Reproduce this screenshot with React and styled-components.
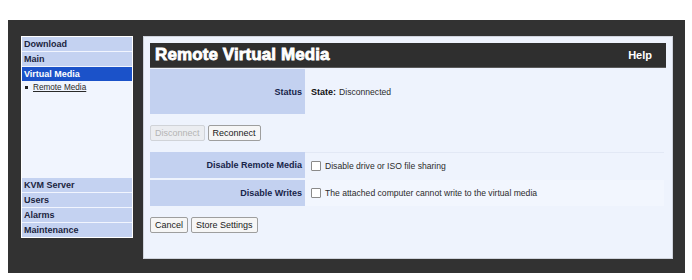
import React from "react";
import styled, { createGlobalStyle, css } from "styled-components";

const GlobalStyle = createGlobalStyle`
  html, body {
    margin: 0;
    padding: 0;
    background: #ffffff;
  }
  body {
    font-family: "Liberation Sans", Arial, sans-serif;
    font-size: 9px;
    color: #222;
  }
`;

const Frame = styled.div`
  margin: 20px 7px 0 8px;
  height: 253px;
  background: #323232;
  box-sizing: border-box;
  padding: 16px 12px 0 13px;
  display: flex;
  align-items: flex-start;
  gap: 10px;
`;

const Sidebar = styled.nav`
  width: 112px;
  height: 202px;
  box-sizing: border-box;
  background: #f1f5fe;
  border: 1px solid #ffffff;
  display: flex;
  flex-direction: column;
  gap: 1px;
`;

const MenuItem = styled.div`
  height: 14px;
  line-height: 14px;
  padding-left: 2px;
  font-weight: bold;
  font-size: 9px;
  color: #1b2440;
  background: #c4d2f1;
  ${(p) =>
    p.$active &&
    css`
      background: #1b52c9;
      color: #ffffff;
    `}
`;

const SubMenu = styled.ul`
  list-style: none;
  margin: -1px 0 0;
  padding: 0 0 0 3px;
`;

const SubItem = styled.li`
  display: flex;
  align-items: center;
  gap: 5px;
  height: 12px;
  font-size: 8.2px;
  color: #2a2a2a;

  &::before {
    content: "";
    width: 3px;
    height: 3px;
    background: #222;
  }

  a {
    color: inherit;
    text-decoration: underline;
  }
`;

const Spacer = styled.div`
  flex: 1;
`;

const Panel = styled.main`
  width: 530px;
  height: 223px;
  box-sizing: border-box;
  background: #eef3fd;
  border: 1px solid #cfd3dc;
  padding: 6px 6px 0 6px;
  display: flex;
  flex-direction: column;
`;

const TitleBar = styled.header`
  height: 25px;
  background: #2f2f2f;
  border-bottom: 1px solid #5a5a5a;
  box-sizing: border-box;
  display: flex;
  align-items: center;
  justify-content: space-between;
  padding: 0 14px 0 5px;
  color: #ffffff;
`;

const Title = styled.h1`
  margin: 0;
  font-size: 17px;
  font-weight: bold;
  -webkit-text-stroke: 0.8px #ffffff;
  letter-spacing: 0.1px;
`;

const HelpLink = styled.span`
  font-size: 11px;
  font-weight: bold;
`;

const FormTable = styled.div`
  display: grid;
  grid-template-columns: 155px 1fr;
  row-gap: 2px;
  margin-top: ${(p) => p.$top || 0}px;
`;

const Label = styled.div`
  height: ${(p) => p.$h}px;
  background: #c3d1f0;
  display: flex;
  align-items: center;
  justify-content: flex-end;
  padding-right: 3px;
  font-weight: bold;
  color: #17244a;
`;

const Value = styled.div`
  height: ${(p) => p.$h}px;
  display: flex;
  align-items: center;
  gap: 3px;
  padding-left: 6px;
  font-size: 8.6px;
  color: #2b2b2b;
  ${(p) =>
    p.$lined &&
    css`
      border-top: 1px solid #e2e8f5;
      box-sizing: border-box;
      margin-right: 2px;
    `}
  ${(p) =>
    p.$shade &&
    css`
      background: #f2f6fe;
      margin-right: 2px;
    `}

  b {
    font-size: 9px;
    color: #111;
  }
`;

const Checkbox = styled.span`
  width: 8px;
  height: 8px;
  border: 1px solid #8a8a8a;
  border-radius: 1px;
  background: #ffffff;
  margin-right: 1px;
`;

const ButtonRow = styled.div`
  display: flex;
  gap: 3px;
  margin-top: ${(p) => p.$top}px;
`;

const Button = styled.button`
  height: 16px;
  padding: 0 4px;
  font-family: "Liberation Sans", Arial, sans-serif;
  font-size: 9px;
  color: #1a1a1a;
  background: #f6f6f6;
  border: 1px solid #9e9e9e;
  border-radius: 2px;
  ${(p) =>
    p.disabled &&
    css`
      color: #b4b4b4;
      background: #ebedf1;
      border-color: #d0d3d8;
    `}
`;

export default function App() {
  return (
    <>
      <GlobalStyle />
      <Frame>
        <Sidebar>
          <MenuItem>Download</MenuItem>
          <MenuItem>Main</MenuItem>
          <MenuItem $active>Virtual Media</MenuItem>
          <SubMenu>
            <SubItem>
              <a>Remote Media</a>
            </SubItem>
          </SubMenu>
          <Spacer />
          <MenuItem>KVM Server</MenuItem>
          <MenuItem>Users</MenuItem>
          <MenuItem>Alarms</MenuItem>
          <MenuItem>Maintenance</MenuItem>
        </Sidebar>
        <Panel>
          <TitleBar>
            <Title>Remote Virtual Media</Title>
            <HelpLink>Help</HelpLink>
          </TitleBar>
          <FormTable $top={1}>
            <Label $h={45}>Status</Label>
            <Value $h={45}>
              <b>State:</b> Disconnected
            </Value>
          </FormTable>
          <ButtonRow $top={11}>
            <Button disabled>Disconnect</Button>
            <Button>Reconnect</Button>
          </ButtonRow>
          <FormTable $top={11}>
            <Label $h={26}>Disable Remote Media</Label>
            <Value $h={26} $lined>
              <Checkbox />
              Disable drive or ISO file sharing
            </Value>
            <Label $h={26}>Disable Writes</Label>
            <Value $h={26} $shade>
              <Checkbox />
              The attached computer cannot write to the virtual media
            </Value>
          </FormTable>
          <ButtonRow $top={11}>
            <Button>Cancel</Button>
            <Button>Store Settings</Button>
          </ButtonRow>
        </Panel>
      </Frame>
    </>
  );
}
